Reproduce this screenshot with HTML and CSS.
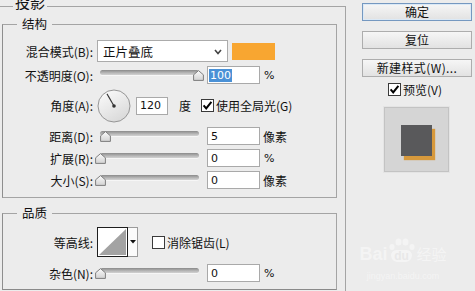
FILE: index.html
```html
<!DOCTYPE html>
<html lang="zh-CN">
<head>
<meta charset="utf-8">
<title>图层样式 - 投影</title>
<link rel="stylesheet" href="styles.css">
</head>
<body>
<div class="dialog">
  <fieldset class="outer">
    <legend class="outer-title">投影</legend>

    <fieldset class="group group-structure">
      <legend class="group-title">结构</legend>

      <div class="row row-blend">
        <span class="label">混合模式(B):</span>
        <div class="select">
          <span class="select-text">正片叠底</span>
          <svg class="chevron" width="8" height="6" viewBox="0 0 8 6"><polyline points="1,1 4,4.5 7,1" fill="none" stroke="#444" stroke-width="1.6"/></svg>
        </div>
        <span class="swatch"></span>
      </div>

      <div class="row row-opacity">
        <span class="label">不透明度(O):</span>
        <div class="slider">
          <span class="track"></span>
          <svg class="thumb" style="left:96px" width="11" height="11" viewBox="0 0 11 11"><defs><linearGradient id="tg1" x1="0" y1="0" x2="0" y2="1"><stop offset="0" stop-color="#fbfbfb"/><stop offset="1" stop-color="#d2d2d2"/></linearGradient></defs><path d="M5.5 0.6 L10.4 4.8 L10.4 10.4 L0.6 10.4 L0.6 4.8 Z" fill="url(#tg1)" stroke="#7d7d7d" stroke-width="1" stroke-linejoin="round"/></svg>
        </div>
        <span class="input input-sel"><span class="selected">100</span></span>
        <span class="unit unit-latin">%</span>
      </div>

      <div class="row row-angle">
        <span class="label">角度(A):</span>
        <svg class="dial" width="34" height="34" viewBox="0 0 34 34"><defs><linearGradient id="dg" x1="0" y1="0" x2="0.6" y2="1"><stop offset="0" stop-color="#fdfdfd"/><stop offset="1" stop-color="#dadada"/></linearGradient></defs><circle cx="17" cy="17" r="16" fill="url(#dg)" stroke="#969696" stroke-width="1"/><line x1="17" y1="17" x2="10" y2="4.9" stroke="#333" stroke-width="1.1"/><circle cx="17" cy="17" r="1.8" fill="#333"/></svg>
        <span class="input input-angle">120</span>
        <span class="unit unit-deg">度</span>
        <span class="check check-global"><svg width="13" height="13" viewBox="0 0 13 13"><rect x="0.5" y="0.5" width="12" height="12" fill="#fff" stroke="#3a3a3a"/><path d="M2.6 6.4 L5.2 9.4 L10.4 2.8" fill="none" stroke="#000" stroke-width="2"/></svg></span>
        <span class="check-text">使用全局光(G)</span>
      </div>

      <div class="row row-slider row-distance">
        <span class="label">距离(D):</span>
        <div class="slider">
          <span class="track"></span>
          <svg class="thumb" style="left:3px" width="11" height="11" viewBox="0 0 11 11"><defs><linearGradient id="tg2" x1="0" y1="0" x2="0" y2="1"><stop offset="0" stop-color="#fbfbfb"/><stop offset="1" stop-color="#d2d2d2"/></linearGradient></defs><path d="M5.5 0.6 L10.4 4.8 L10.4 10.4 L0.6 10.4 L0.6 4.8 Z" fill="url(#tg2)" stroke="#7d7d7d" stroke-width="1" stroke-linejoin="round"/></svg>
        </div>
        <span class="input">5</span>
        <span class="unit">像素</span>
      </div>

      <div class="row row-slider">
        <span class="label">扩展(R):</span>
        <div class="slider">
          <span class="track"></span>
          <svg class="thumb" style="left:-2px" width="11" height="11" viewBox="0 0 11 11"><defs><linearGradient id="tg3" x1="0" y1="0" x2="0" y2="1"><stop offset="0" stop-color="#fbfbfb"/><stop offset="1" stop-color="#d2d2d2"/></linearGradient></defs><path d="M5.5 0.6 L10.4 4.8 L10.4 10.4 L0.6 10.4 L0.6 4.8 Z" fill="url(#tg3)" stroke="#7d7d7d" stroke-width="1" stroke-linejoin="round"/></svg>
        </div>
        <span class="input">0</span>
        <span class="unit unit-latin">%</span>
      </div>

      <div class="row row-slider">
        <span class="label">大小(S):</span>
        <div class="slider">
          <span class="track"></span>
          <svg class="thumb" style="left:-2px" width="11" height="11" viewBox="0 0 11 11"><defs><linearGradient id="tg4" x1="0" y1="0" x2="0" y2="1"><stop offset="0" stop-color="#fbfbfb"/><stop offset="1" stop-color="#d2d2d2"/></linearGradient></defs><path d="M5.5 0.6 L10.4 4.8 L10.4 10.4 L0.6 10.4 L0.6 4.8 Z" fill="url(#tg4)" stroke="#7d7d7d" stroke-width="1" stroke-linejoin="round"/></svg>
        </div>
        <span class="input">0</span>
        <span class="unit">像素</span>
      </div>
    </fieldset>

    <fieldset class="group group-quality">
      <legend class="group-title">品质</legend>

      <div class="row row-contour">
        <span class="label">等高线:</span>
        <div class="contour">
          <svg class="contour-curve" width="31" height="30" viewBox="0 0 31 30"><rect x="0.5" y="0.5" width="30" height="29" fill="#fff" stroke="#1e1e1e"/><polygon points="2,28 29,2 29,28" fill="#a3a3a3"/></svg>
          <span class="contour-arrow"><svg width="6" height="4" viewBox="0 0 6 4"><polygon points="0,0 6,0 3,3.5" fill="#111"/></svg></span>
        </div>
        <span class="check check-aa"><svg width="13" height="13" viewBox="0 0 13 13"><rect x="0.5" y="0.5" width="12" height="12" fill="#fff" stroke="#3a3a3a"/></svg></span>
        <span class="check-text">消除锯齿(L)</span>
      </div>

      <div class="row row-slider row-noise">
        <span class="label">杂色(N):</span>
        <div class="slider">
          <span class="track"></span>
          <svg class="thumb" style="left:-2px" width="11" height="11" viewBox="0 0 11 11"><defs><linearGradient id="tg5" x1="0" y1="0" x2="0" y2="1"><stop offset="0" stop-color="#fbfbfb"/><stop offset="1" stop-color="#d2d2d2"/></linearGradient></defs><path d="M5.5 0.6 L10.4 4.8 L10.4 10.4 L0.6 10.4 L0.6 4.8 Z" fill="url(#tg5)" stroke="#7d7d7d" stroke-width="1" stroke-linejoin="round"/></svg>
        </div>
        <span class="input">0</span>
        <span class="unit unit-latin">%</span>
      </div>
    </fieldset>
  </fieldset>

  <div class="side">
    <div class="btn btn-ok">确定</div>
    <div class="btn">复位</div>
    <div class="btn btn-new">新建样式(W)...</div>
    <div class="preview-toggle">
      <span class="check"><svg width="13" height="13" viewBox="0 0 13 13"><rect x="0.5" y="0.5" width="12" height="12" fill="#fff" stroke="#3a3a3a"/><path d="M2.6 6.4 L5.2 9.4 L10.4 2.8" fill="none" stroke="#000" stroke-width="2"/></svg></span>
      <span class="check-text">预览(V)</span>
    </div>
    <div class="preview">
      <span class="preview-square"></span>
    </div>
    <div class="watermark">
      <div class="wm-logo">
        <span class="wm-bai">Bai</span>
        <span class="wm-paw">
          <svg class="wm-toes" width="26" height="12" viewBox="0 0 26 12"><ellipse cx="3" cy="9" rx="2.6" ry="3" fill="#fff"/><ellipse cx="9.5" cy="4" rx="3" ry="3.6" fill="#fff"/><ellipse cx="16.5" cy="4" rx="3" ry="3.6" fill="#fff"/><ellipse cx="23" cy="9" rx="2.6" ry="3" fill="#fff"/></svg>
          <span class="wm-du">du</span>
        </span>
        <span class="wm-jy">经验</span>
      </div>
      <div class="wm-url">jingyan.baidu.com</div>
    </div>
  </div>
</div>
</body>
</html>
```

FILE: styles.css
```css
* {
  box-sizing: border-box;
}

html,
body {
  margin: 0;
  padding: 0;
}

body {
  width: 475px;
  height: 291px;
  overflow: hidden;
  background: #ececec;
  color: #111;
  font-family: "Noto Sans CJK SC", "Noto Sans", sans-serif;
  font-size: 12px;
}

.dialog {
  display: flex;
  align-items: flex-start;
  height: 291px;
  overflow: hidden;
}

/* ---------- group boxes ---------- */

.outer {
  flex: none;
  width: 346px;
  height: 330px;
  margin: -6px 0 0 0;
  padding: 0 8px 0 2px;
  border: 1px solid #a4a4a4;
  border-left: none;
  border-bottom: none;
  min-width: 0;
}

.outer-title {
  margin-left: 11px;
  padding: 0 2px 8px;
  font-size: 15px;
  line-height: 16px;
}

.group {
  width: 335px;
  margin: 0;
  padding: 0;
  border: 1px solid #a4a4a4;
  border-left-color: #8e8e8e;
  min-width: 0;
}

.group-title {
  margin-left: 14px;
  padding: 0 5px;
  font-size: 12.5px;
  line-height: 14px;
}

.group-structure {
  margin-top: -1px;
  padding-bottom: 8px;
}

.group-quality {
  margin-top: 8px;
  padding-bottom: 7px;
  border-bottom-color: #8a8a8a;
}

/* ---------- rows ---------- */

.row {
  display: flex;
  align-items: center;
  height: 18px;
  margin-top: 4px;
}

.label {
  flex: none;
  width: 90px;
  margin-right: 4px;
  text-align: right;
  white-space: nowrap;
}

.row-blend {
  height: 22px;
  margin-top: 9px;
}

.row-opacity {
  margin-top: 4px;
}

.row-angle {
  height: 33px;
  margin-top: 5px;
}

.row-distance {
  margin-top: 5px;
}

.row-contour {
  height: 30px;
  margin-top: 7px;
}

.row-noise {
  margin-top: 7px;
}

/* select */

.select {
  flex: none;
  display: flex;
  align-items: center;
  justify-content: space-between;
  width: 131px;
  height: 22px;
  padding: 0 5px 0 5px;
  background: #fff;
  border: 1px solid #ababab;
}

.select-text {
  font-size: 12.5px;
}

.chevron {
  margin-top: 1px;
}

.swatch {
  flex: none;
  width: 43px;
  height: 17px;
  margin-left: 4px;
  background: #f8a631;
}

/* slider */

.slider {
  position: relative;
  flex: none;
  width: 103px;
  height: 18px;
}

.track {
  position: absolute;
  left: 3px;
  top: 4px;
  width: 99px;
  height: 5px;
  border-radius: 3px;
  background: linear-gradient(#8a8a8a, #b9b9b9 60%, #d2d2d2);
  box-shadow: 0 1px 0 #f6f6f6;
}

.thumb {
  position: absolute;
  top: 4px;
}

/* inputs */

.input {
  flex: none;
  display: flex;
  align-items: center;
  width: 53px;
  height: 18px;
  margin-left: 7px;
  padding-left: 3px;
  background: #fff;
  border: 1px solid #a9a9a9;
  font-family: "DejaVu Sans", sans-serif;
  font-size: 11px;
}

.input-sel {
  padding-left: 1px;
}

.selected {
  padding: 0 1px 0 1px;
  line-height: 13px;
  background: #4a91d6;
  color: #fff;
}

.input-angle {
  width: 32px;
  margin-left: 5px;
}

.unit {
  margin-left: 3px;
  white-space: nowrap;
}

.unit-latin {
  margin-left: 4px;
  font-family: "DejaVu Sans", sans-serif;
  font-size: 11px;
}

.unit-deg {
  margin-left: 11px;
}

/* dial */

.dial {
  flex: none;
}

/* checkbox */

.check {
  display: flex;
  flex: none;
  width: 13px;
  height: 13px;
}

.check-global {
  margin-left: 10px;
}

.check-text {
  margin-left: 2px;
  white-space: nowrap;
}

/* contour */

.contour {
  flex: none;
  display: flex;
  width: 41px;
  height: 30px;
}

.contour-arrow {
  display: flex;
  align-items: center;
  justify-content: center;
  width: 10px;
  height: 30px;
  background: #fbfbfb;
  border: 1px solid #9b9b9b;
  border-left: none;
}

.check-aa {
  margin-left: 14px;
}

/* ---------- side column ---------- */

.side {
  flex: none;
  display: flex;
  flex-direction: column;
  width: 110px;
  margin-left: 16px;
}

.btn {
  display: flex;
  align-items: center;
  justify-content: center;
  height: 18px;
  margin-top: 10px;
  background: linear-gradient(#f6f6f6, #e2e2e2);
  border: 1px solid #adadad;
  font-size: 12px;
  line-height: 1;
  white-space: nowrap;
}

.btn-new {
  letter-spacing: 0.4px;
}

.btn-ok {
  margin-top: 3px;
  border-color: #7598c0;
  box-shadow: inset 0 0 0 1px #dbe9f6;
}

.preview-toggle {
  display: flex;
  align-items: center;
  justify-content: center;
  height: 13px;
  margin-top: 6px;
  padding-right: 4px;
}

.preview {
  display: flex;
  width: 65px;
  height: 65px;
  margin-top: 11px;
  margin-left: 22px;
  padding: 17px 0 0 16px;
  background: #d5d5d5;
  border: 1px solid #c3c3c3;
  box-shadow: 0 0 0 1px #e4e4e4;
}

.preview-square {
  width: 31px;
  height: 31px;
  background: #59595b;
  box-shadow: 3px 4px 1px rgba(215, 150, 52, 0.95);
}

/* watermark */

.watermark {
  display: flex;
  flex-direction: column;
  align-items: center;
  width: 90px;
  margin-top: 64px;
  margin-left: -4px;
  opacity: 0.45;
  color: #fff;
}

.wm-logo {
  display: flex;
  align-items: flex-end;
  height: 26px;
}

.wm-bai {
  font-family: "Liberation Sans", sans-serif;
  font-weight: bold;
  font-size: 18px;
  line-height: 16px;
}

.wm-paw {
  display: flex;
  flex-direction: column;
  align-items: center;
  margin-left: 1px;
}

.wm-toes {
  display: block;
}

.wm-du {
  padding: 0 3px;
  border-radius: 6px 6px 7px 7px;
  background: #fff;
  color: #e4e4e4;
  font-family: "Liberation Sans", sans-serif;
  font-weight: bold;
  font-size: 12px;
  line-height: 12px;
}

.wm-jy {
  margin-left: 2px;
  font-size: 15px;
  line-height: 16px;
}

.wm-url {
  margin-top: 9px;
  font-family: "Liberation Sans", sans-serif;
  font-size: 9px;
  line-height: 10px;
}
```
